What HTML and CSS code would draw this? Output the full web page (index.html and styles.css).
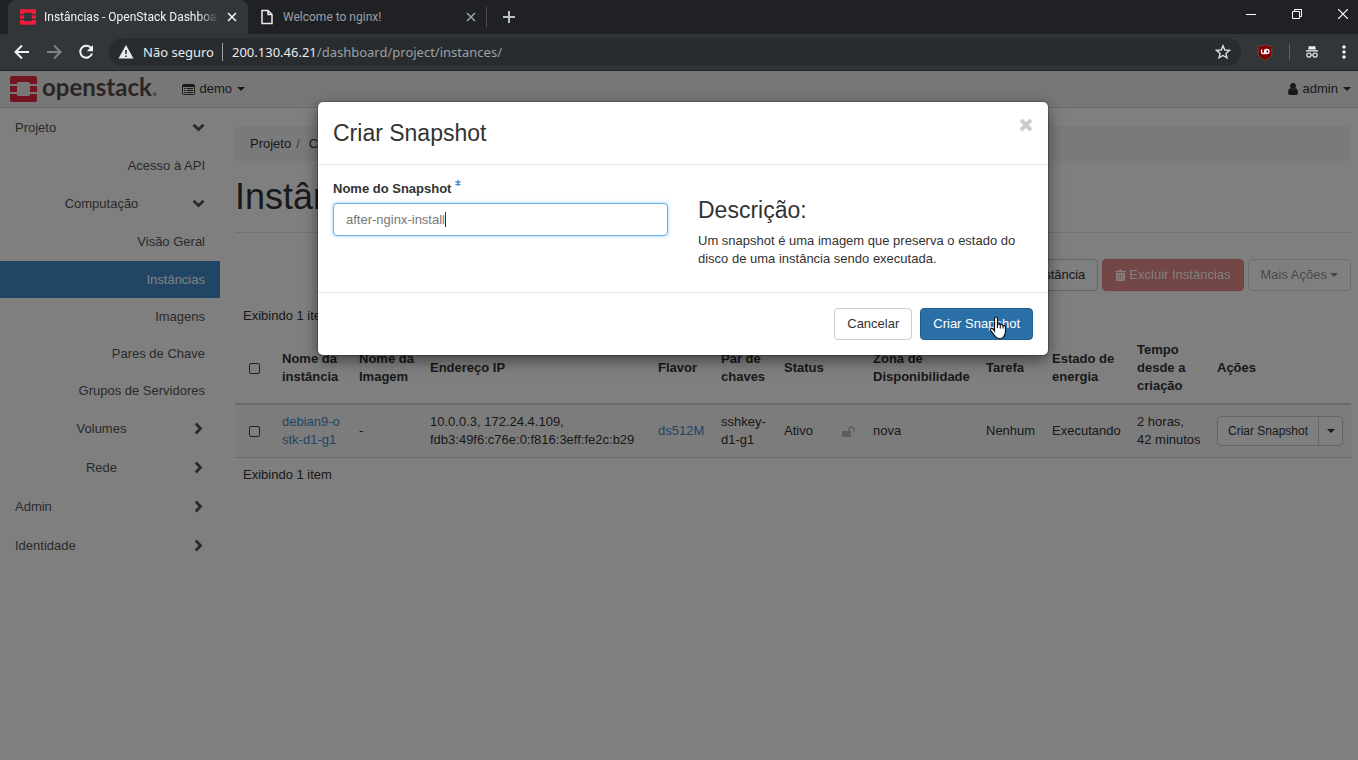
FILE: index.html
```html
<!DOCTYPE html>
<html lang="pt-BR">
<head>
<meta charset="utf-8">
<title>Instâncias - OpenStack Dashboard</title>
<link rel="stylesheet" href="styles.css">
</head>
<body>
<svg class="defs" width="0" height="0" aria-hidden="true">
  <symbol id="down" viewBox="0 0 13 9"><path d="M1.500 1.700 6.500 6.500 11.500 1.700" fill="none" stroke="currentColor" stroke-width="2.800"/></symbol>
  <symbol id="right" viewBox="0 0 9 13"><path d="M1.700 1.500 6.500 6.500 1.700 11.500" fill="none" stroke="currentColor" stroke-width="2.800"/></symbol>
  <symbol id="mark" viewBox="0 0 27 26"><path d="M2 0H25Q27 0 27 2V8H20V7.500Q20 6 18.500 6H8.500Q7 6 7 7.500V8H0V2Q0 0 2 0ZM0 10H7V16H0ZM20 10H27V16H20ZM0 18H7V18.500Q7 20 8.500 20H18.500Q20 20 20 18.500V18H27V24Q27 26 25 26H2Q0 26 0 24Z" fill="currentColor"/></symbol>
  <symbol id="cross" viewBox="0 0 10 10"><path d="M1 1 9 9M9 1 1 9" stroke="currentColor" stroke-width="1.600" fill="none"/></symbol>
</svg>
<div class="window">
  <header class="tabs">
    <div class="tab tab-active">
      <svg class="favicon" width="16" height="16"><use href="#mark"/></svg>
      <span class="tab-title">Instâncias - OpenStack Dashboard</span>
      <button class="plain" aria-label="Fechar guia"><svg width="10" height="10"><use href="#cross"/></svg></button>
    </div>
    <div class="tab">
      <svg width="12" height="16" viewBox="0 0 12 16"><path d="M1 1.500H7L11 5.500V14.500H1ZM7 1.500V5.500H11" fill="none" stroke="#e8eaed" stroke-width="1.500"/></svg>
      <span class="tab-title">Welcome to nginx!</span>
      <button class="plain" aria-label="Fechar guia"><svg width="10" height="10"><use href="#cross"/></svg></button>
    </div>
    <button class="plain new-tab" aria-label="Nova guia"><svg width="12" height="12" viewBox="0 0 12 12"><path d="M6 0V12M0 6H12" stroke="#bdc1c6" stroke-width="2"/></svg></button>
    <div class="controls">
      <button class="plain" aria-label="Minimizar"><svg width="10" height="10" viewBox="0 0 10 10"><path d="M0 5.500H10" stroke="#fff"/></svg></button>
      <button class="plain" aria-label="Restaurar"><svg width="10" height="10" viewBox="0 0 10 10"><path d="M.5 2.500H7.500V9.500H.5ZM2.500 2.500V.5H9.500V7.500H7.500" fill="none" stroke="#fff"/></svg></button>
      <button class="plain" aria-label="Fechar"><svg width="10" height="10" viewBox="0 0 10 10"><path d="M0 0 10 10M10 0 0 10" stroke="#fff" stroke-width="1.200"/></svg></button>
    </div>
  </header>
  <div class="toolbar">
    <button class="plain" aria-label="Voltar"><svg width="16" height="16" viewBox="0 0 16 16"><path d="M15 8H2M8 1.500 1.500 8 8 14.500" fill="none" stroke="#f1f3f4" stroke-width="2"/></svg></button>
    <button class="plain" aria-label="Avançar"><svg width="16" height="16" viewBox="0 0 16 16"><path d="M1 8H14M8 1.500 14.500 8 8 14.500" fill="none" stroke="#7f8386" stroke-width="2"/></svg></button>
    <button class="plain" aria-label="Recarregar"><svg width="16" height="16" viewBox="0 0 16 16"><path d="M13.200 4.300A6 6 0 1 0 14 9.500" fill="none" stroke="#f1f3f4" stroke-width="2"/><path d="M15 1V7.200H8.800Z" fill="#f1f3f4"/></svg></button>
    <div class="omnibox">
      <svg width="16" height="14" viewBox="0 0 16 14"><path d="M8 0 15.500 13.500H.5Z" fill="#e8eaed"/><path d="M8 5V9M8 10.500V12" stroke="#282c2f" stroke-width="1.600"/></svg>
      <span class="insecure">Não seguro</span>
      <span class="url"><span class="host">200.130.46.21</span>/dashboard/project/instances/</span>
      <button class="plain" aria-label="Favorito"><svg width="16" height="16" viewBox="0 0 16 16"><path d="M8 1.800 9.800 6 14.400 6.400 10.900 9.400 12 13.900 8 11.500 4 13.900 5.100 9.400 1.600 6.400 6.200 6Z" fill="none" stroke="#dadce0" stroke-width="1.400"/></svg></button>
    </div>
    <svg width="16" height="17" viewBox="0 0 16 17"><path d="M8 .5C10 2 12.500 2 15 2V9C15 12.500 11 15 8 16.500 5 15 1 12.500 1 9V2C3.500 2 6 2 8 .5Z" fill="#800000" stroke="#5f4a4a"/><path d="M4.600 5.500V8.500Q4.600 9.500 6 9.500H7.600V5.500M9 5.500V9.500H10Q12 9.500 12 7.500T10 5.500Z" fill="none" stroke="#fff" stroke-width="1.300"/></svg>
    <span class="bar-rule"></span>
    <svg class="incognito" width="14" height="16" viewBox="0 0 16 16"><path d="M4.500 1 8 1.700 11.500 1 12.500 5H3.500ZM1 6H15V7.500H1Z" fill="#f1f3f4"/><circle cx="4.500" cy="11.500" r="2.400" fill="none" stroke="#f1f3f4" stroke-width="1.300"/><circle cx="11.500" cy="11.500" r="2.400" fill="none" stroke="#f1f3f4" stroke-width="1.300"/><path d="M7 11.200H9" stroke="#f1f3f4"/></svg>
    <button class="plain" aria-label="Menu"><svg width="4" height="14" viewBox="0 0 4 14"><g fill="#f1f3f4"><circle cx="2" cy="2" r="1.700"/><circle cx="2" cy="7" r="1.700"/><circle cx="2" cy="12" r="1.700"/></g></svg></button>
  </div>

  <div class="page">
    <nav class="navbar">
      <a class="brand" href="#"><svg width="27" height="26"><use href="#mark"/></svg><span class="word">openstack<span class="dot">.</span></span></a>
      <a class="nav-link" href="#"><svg width="13" height="11" viewBox="0 0 13 11"><path d="M.5 1.500Q.5 .5 1.500 .5H11.500Q12.500 .5 12.500 1.500V9.500Q12.500 10.500 11.500 10.500H1.500Q.5 10.500 .5 9.500Z" fill="none" stroke="#333"/><path d="M1 1H12V3H1Z" fill="#333"/><path d="M2 4.500H3.500M2 6.500H3.500M2 8.500H3.500M4.500 4.500H11M4.500 6.500H11M4.500 8.500H11" stroke="#333"/></svg>demo<span class="caret"></span></a>
      <a class="nav-link user" href="#"><svg width="10" height="12" viewBox="0 0 10 12"><circle cx="5" cy="3" r="2.900" fill="#333"/><path d="M2.300 5Q5 7.500 7.700 5 10 6 10 9.500 10 12 8 12H2Q0 12 0 9.500 0 6 2.300 5Z" fill="#333"/></svg>admin<span class="caret"></span></a>
    </nav>
    <div class="columns">
      <aside class="sidebar">
        <a class="group top" href="#"><span>Projeto</span><svg width="13" height="9"><use href="#down"/></svg></a>
        <a class="leaf" href="#">Acesso à API</a>
        <a class="group" href="#"><span>Computação</span><svg width="13" height="9"><use href="#down"/></svg></a>
        <a class="leaf" href="#">Visão Geral</a>
        <a class="leaf active" href="#">Instâncias</a>
        <a class="leaf" href="#">Imagens</a>
        <a class="leaf" href="#">Pares de Chave</a>
        <a class="leaf" href="#">Grupos de Servidores</a>
        <a class="group" href="#"><span>Volumes</span><svg class="closed" width="9" height="13"><use href="#right"/></svg></a>
        <a class="group" href="#"><span>Rede</span><svg class="closed" width="9" height="13"><use href="#right"/></svg></a>
        <a class="group top" href="#"><span>Admin</span><svg class="closed" width="9" height="13"><use href="#right"/></svg></a>
        <a class="group top" href="#"><span>Identidade</span><svg class="closed" width="9" height="13"><use href="#right"/></svg></a>
      </aside>
      <main class="content">
        <ol class="breadcrumb"><li>Projeto</li><li>Computação</li><li>Instâncias</li></ol>
        <h1>Instâncias</h1>
        <div class="actions">
          <button class="btn">Disparar Instância</button>
          <button class="btn danger" disabled><svg width="11" height="12" viewBox="0 0 11 12"><path d="M0 2H3.500L4 .5H7L7.500 2H11V3.300H0ZM1 4H10V11Q10 12 9 12H2Q1 12 1 11Z" fill="#fff"/><path d="M3.500 5V10.500M5.500 5V10.500M7.500 5V10.500" stroke="#e27d7a" stroke-width=".6"/></svg>Excluir Instâncias</button>
          <button class="btn more" disabled>Mais Ações<span class="caret"></span></button>
        </div>
        <div class="count">Exibindo 1 item</div>
        <table>
          <colgroup><col class="c-check"><col class="c-name"><col class="c-image"><col><col class="c-key"><col class="c-key"><col class="c-status"><col class="c-lock"><col class="c-zone"><col class="c-task"><col class="c-power"><col class="c-time"><col class="c-act"></colgroup>
          <thead><tr><th><input type="checkbox" aria-label="Selecionar tudo"></th><th>Nome da instância</th><th>Nome da Imagem</th><th>Endereço IP</th><th>Flavor</th><th>Par de chaves</th><th>Status</th><th></th><th>Zona de Disponibilidade</th><th>Tarefa</th><th>Estado de energia</th><th>Tempo desde a criação</th><th>Ações</th></tr></thead>
          <tbody><tr><td><input type="checkbox" aria-label="Selecionar instância"></td><td><a href="#">debian9-o<br>stk-d1-g1</a></td><td>-</td><td>10.0.0.3, 172.24.4.109,<br>fdb3:49f6:c76e:0:f816:3eff:fe2c:b29</td><td><a href="#">ds512M</a></td><td>sshkey-<br>d1-g1</td><td>Ativo</td><td><svg width="13" height="11" viewBox="0 0 13 11"><path d="M0 5H9V10Q9 11 8 11H1Q0 11 0 10Z" fill="#bbb"/><path d="M7 5.500V3.500Q7 1 9.500 1T12 3.500V5.500" fill="none" stroke="#bbb" stroke-width="1.600"/></svg></td><td>nova</td><td>Nenhum</td><td>Executando</td><td>2 horas,<br>42 minutos</td><td class="cell-act"><div class="split"><button class="btn">Criar Snapshot</button><button class="btn" aria-label="Mais ações"><span class="caret"></span></button></div></td></tr></tbody>
        </table>
        <div class="count">Exibindo 1 item</div>
      </main>
    </div>

    <div class="backdrop">
      <form class="modal" role="dialog" aria-labelledby="dialog-title">
        <div class="modal-header">
          <h2 id="dialog-title">Criar Snapshot</h2>
          <button type="button" class="plain close" aria-label="Fechar"><svg width="14" height="14" viewBox="0 0 14 14"><path d="M2 2 12 12M12 2 2 12" stroke="#ccc" stroke-width="4"/></svg></button>
        </div>
        <div class="modal-body">
          <div class="field">
            <label for="name">Nome do Snapshot <svg width="6" height="6" viewBox="0 0 6 6"><path d="M3 0V6M.4 1.500 5.600 4.500M5.600 1.500 .4 4.500" stroke="#428bca" stroke-width="1.400"/></svg></label>
            <div class="input-wrap"><input id="name" type="text" value="after-nginx-install"><span class="text-caret"></span></div>
          </div>
          <div class="help">
            <h2>Descrição:</h2>
            <p>Um snapshot é uma imagem que preserva o estado do disco de uma instância sendo executada.</p>
          </div>
        </div>
        <div class="modal-footer">
          <button type="button" class="btn">Cancelar</button>
          <button type="button" class="btn primary">Criar Snapshot<svg class="pointer" width="18" height="24" viewBox="0 0 18 24"><path d="M5.500 13V3Q5.500 1 7 1T8.500 3V8.500Q10.500 7 11.300 9 13.300 7.700 14 9.700 16.500 8.700 16.500 11.500V15.500Q16.500 19 14.500 21 13.500 22.500 10.500 22.500 7.500 22.500 6 20L1.500 14.500Q1 13 2.200 12.500 3.500 12 5.500 15Z" fill="#fff" stroke="#111" stroke-width="1.200"/><path d="M8.500 8V12M11.300 9V12.500M14 10V12.500" stroke="#111" stroke-width="1.100"/></svg></button>
        </div>
      </form>
    </div>
  </div>
</div>
</body>
</html>
```
FILE: styles.css
```css
* { box-sizing: border-box; }
body { margin: 0; font: 13px/18px "Liberation Sans", Arial, sans-serif; color: #333; background: #fff; }
button, input { font: inherit; color: inherit; }
a { color: #428bca; text-decoration: none; }
svg { flex: none; }
.defs { position: absolute; }
.plain { display: flex; align-items: center; justify-content: center; padding: 0; border: 0; background: none; }
.window { display: flex; flex-direction: column; min-height: 100vh; }

/* Browser chrome */
.tabs { display: flex; height: 34px; padding-left: 8px; background: #202124; color: #9aa0a6; font: 12px/18px Roboto, sans-serif; }
.tab { display: flex; align-items: center; gap: 10px; width: 239px; padding: 0 10px 0 13px; border-right: 1px solid transparent; }
.tab + .tab { border-right: 1px solid #4a4d51; margin: 7px 0 7px; }
.tab-active { gap: 8px; width: 240px; padding: 0 10px 0 12px; border-radius: 8px 8px 0 0; background: #323639; color: #f1f3f4; }
.tab-title { flex: 1; overflow: hidden; white-space: nowrap; }
.tab-active .tab-title { mask-image: linear-gradient(to right, #000 88%, transparent); }
.favicon { color: #f01c3c; }
.new-tab { width: 44px; }
.controls { display: flex; gap: 36px; margin: 0 10px 6px auto; }
.toolbar { display: flex; align-items: center; gap: 16px; height: 37px; padding: 0 12px 0 14px; border-bottom: 1px solid #222; background: #323639; }
.omnibox { display: flex; flex: 1; align-items: center; gap: 9px; height: 28px; margin-left: -1px; padding: 0 10px 0 9px; border-radius: 14px; background: #282c2f; color: #9aa0a6; font: 13px/18px "Noto Sans", sans-serif; }
.insecure { padding-right: 8px; border-right: 1px solid #9aa0a6; color: #e8eaed; }
.url { flex: 1; }
.host { color: #e8eaed; }
.bar-rule { width: 1px; height: 16px; background: #5f6368; }
.incognito { margin: 0 7px 0 -1px; }

/* Dashboard */
.page { position: relative; flex: 1; }
.navbar { display: flex; align-items: center; gap: 24px; height: 37px; padding: 0 7px 0 10px; border-bottom: 1px solid #d4d4d4; background: #eee; }
.brand { display: flex; align-items: center; gap: 5px; color: #e62a3c; }
.word { padding-bottom: 4px; color: #564a4a; font: 700 24px/26px Lato, sans-serif; }
.dot { color: #999; }
.nav-link { display: flex; align-items: center; gap: 5px; color: #333; }
.user { margin-left: auto; }
.caret { border: 4px solid transparent; border-top-color: currentColor; border-bottom: 0; }
.columns { display: flex; }
.sidebar { width: 220px; }
.sidebar a { display: flex; align-items: center; padding: 0 15px; color: #555; }
.group { height: 39px; }
.group span { flex: 1; text-align: center; }
.group svg { margin-left: 4px; }
.group .closed { margin: 0 2px 0 6px; }
.group.top span { text-align: left; }
.leaf { justify-content: flex-end; height: 37px; }
.leaf:has(+ .active) { height: 38px; }
.sidebar .active { background: #428bca; color: #fff; }
.content { flex: 1; min-width: 0; padding: 18px 7px 0 15px; }
.breadcrumb { display: flex; margin: 0; padding: 9px 15px 8px; border-radius: 4px; background: #f5f5f5; list-style: none; }
.breadcrumb li + li::before { content: "/"; padding: 0 9px 0 5px; color: #777; }
h1 { margin: 16px 0 26px; padding-bottom: 15px; border-bottom: 1px solid #e4e4e4; font-size: 36px; line-height: 40px; font-weight: 400; }
.actions { display: flex; justify-content: flex-end; gap: 4px; }
.btn { display: flex; align-items: center; justify-content: center; height: 32px; padding: 0 12px; border: 1px solid #ccc; border-radius: 4px; background: #fff; white-space: nowrap; }
.danger { gap: 3px; border-color: #d43f3a; background: #d9534f; color: #fff; }
.btn:disabled { opacity: .65; }
.more { gap: 3px; color: #555; }
.count { padding: 8px; }
.actions + .count { padding-top: 16px; }
table { width: 100%; table-layout: fixed; border-collapse: separate; border-spacing: 0; }
th, td { padding: 8px; text-align: left; vertical-align: middle; }
th { border-bottom: 2px solid #d4d4d4; }
td { border-bottom: 1px solid #d8d8d8; background: #f9f9f9; white-space: nowrap; }
td svg { display: block; }
.c-check { width: 39px; } .c-name { width: 77px; } .c-image { width: 71px; } .c-key { width: 63px; }
.c-status { width: 58px; } .c-lock { width: 31px; } .c-zone { width: 113px; } .c-task { width: 66px; }
.c-power { width: 85px; } .c-time { width: 80px; } .c-act { width: 142px; }
input[type="checkbox"] { display: block; appearance: none; width: 11px; height: 11px; margin: 0 0 0 6px; border: 1px solid #444; border-radius: 2px; background: #fff; }
.split { display: flex; }
.split .btn { height: 30px; padding: 0 7px; font-size: 12px; }
.cell-act { padding-top: 0; padding-bottom: 0; }
.split .btn:first-child { flex: 1; border-radius: 4px 0 0 4px; }
.split .btn + .btn { width: 25px; margin-left: -1px; border-radius: 0 4px 4px 0; }

/* Dialog */
.backdrop { position: absolute; inset: 0; padding: 31px 0 0 8px; background: rgba(0, 0, 0, .5); }
.modal { max-width: 730px; margin: 0 auto; border-radius: 5px; background: #fff; box-shadow: 0 5px 15px rgba(0, 0, 0, .5), 0 0 0 1px rgba(0, 0, 0, .2); }
.modal-header { display: flex; align-items: flex-start; justify-content: space-between; padding: 16px 15px; border-bottom: 1px solid #e5e5e5; }
h2 { margin: 0; font-size: 23px; line-height: 30px; font-weight: 400; }
.modal-body { display: grid; grid-template-columns: 1fr 1fr; gap: 30px; padding: 15px; }
label { display: flex; gap: 4px; margin-bottom: 5px; font-weight: 700; }
.input-wrap { position: relative; }
input[type="text"] { display: block; width: 100%; height: 33px; padding: 0 12px; border: 1px solid #66afe9; border-radius: 4px; outline: 0; color: #777; box-shadow: 0 0 4px rgba(102, 175, 233, .6); }
.text-caret { position: absolute; top: 9px; left: 112px; width: 1px; height: 15px; background: #333; }
.help { padding-top: 15px; }
.help p { margin: 7px 0 9px; }
.modal-footer { display: flex; justify-content: flex-end; gap: 8px; padding: 15px; border-top: 1px solid #e5e5e5; }
.primary { position: relative; border-color: #245f8f; background: #2a6fa8; color: #fff; }
.pointer { position: absolute; top: 7px; left: 68px; }
```
